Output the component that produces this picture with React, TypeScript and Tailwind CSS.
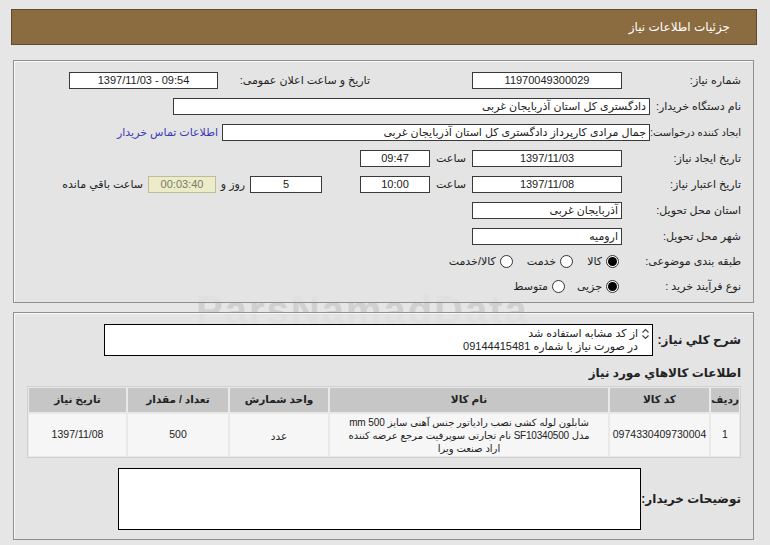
import React from 'react'

function Box({ w, children, align = 'center', className = '' }: { w: string; children?: React.ReactNode; align?: 'center' | 'right'; className?: string }) {
  return (
    <div
      className={`${w} h-[17px] shrink-0 border border-[#3a3a3a] bg-white flex items-center px-[3px] leading-none whitespace-nowrap overflow-hidden ${
        align === 'center' ? 'justify-center' : 'justify-start'
      } ${className}`}
    >
      {children}
    </div>
  )
}

function Radio({ checked, label }: { checked?: boolean; label: string }) {
  return (
    <div className="flex items-center gap-[4px]">
      <span className="w-[13px] h-[13px] rounded-full border border-[#333] bg-white flex items-center justify-center">
        {checked && <span className="w-[9px] h-[9px] rounded-full bg-black"></span>}
      </span>
      <span>{label}</span>
    </div>
  )
}

function Row({ children }: { children: React.ReactNode }) {
  return <div className="h-[26px] flex items-center whitespace-nowrap">{children}</div>
}

export default function App() {
  return (
    <div
      dir="rtl"
      className="relative min-h-[545px] overflow-hidden bg-[#e6e6e6] pt-[9px] pl-[11px] pr-[13px] text-[11px] text-[#222] font-['Liberation_Sans','DejaVu_Sans',sans-serif]"
    >
      {/* watermark */}
      <div className="pointer-events-none absolute inset-0 select-none" dir="ltr">
        <div className="absolute left-[196px] top-[295px] text-[40px] leading-[30px] font-bold tracking-[2px] text-[#cbcbcb] opacity-80">
          ParsNamadData
        </div>
      </div>

      <div className="relative h-[36px] bg-[#8b6b40] border border-[#5e4a2c] flex items-center pr-[26px] text-white text-[12px]">
        جزئیات اطلاعات نیاز
      </div>

      {/* main info panel */}
      <div className="relative mt-[15px] ml-[2px] mr-[3px] border border-[#8f8f8f] shadow-[inset_1px_1px_0_#fafafa] bg-[#e3e3e3]/80 pt-[6px] pb-[3px] pr-[12px]">
        <Row>
          <div className="w-[119px] shrink-0">شماره نیاز:</div>
          <Box w="w-[150px]">11970049300029</Box>
          <div className="w-[152px] shrink-0 mr-[102px]">تاریخ و ساعت اعلان عمومی:</div>
          <Box w="w-[149px]">
            <span dir="ltr">1397/11/03 - 09:54</span>
          </Box>
        </Row>
        <Row>
          <div className="w-[91px] shrink-0">نام دستگاه خریدار:</div>
          <Box w="w-[477px]" align="right">دادگستری کل استان آذربایجان غربی</Box>
        </Row>
        <Row>
          <div className="w-[91px] shrink-0 text-[10px] tracking-[-0.3px]">ایجاد کننده درخواست:</div>
          <Box w="w-[428px]" align="right">جمال مرادی کارپرداز دادگستری کل استان آذربایجان غربی</Box>
          <a className="mr-[4px] text-[#3a3ab8]">اطلاعات تماس خریدار</a>
        </Row>
        <Row>
          <div className="w-[119px] shrink-0">تاریخ ایجاد نیاز:</div>
          <Box w="w-[150px]">1397/11/03</Box>
          <div className="w-[42px] shrink-0 text-center">ساعت</div>
          <Box w="w-[70px]">09:47</Box>
        </Row>
        <Row>
          <div className="w-[119px] shrink-0">تاریخ اعتبار نیاز:</div>
          <Box w="w-[150px]">1397/11/08</Box>
          <div className="w-[42px] shrink-0 text-center">ساعت</div>
          <Box w="w-[70px]">10:00</Box>
          <Box w="w-[72px]" className="mr-[38px]">5</Box>
          <div className="w-[34px] shrink-0 text-center">روز و</div>
          <div className="w-[68px] h-[17px] shrink-0 border border-[#bdbd9a] bg-[#ececc8] text-[#7a7a6a] flex items-center justify-center">
            00:03:40
          </div>
          <div className="mr-[5px]">ساعت باقي مانده</div>
        </Row>
        <Row>
          <div className="w-[119px] shrink-0">استان محل تحویل:</div>
          <Box w="w-[150px]" align="right">آذربایجان غربی</Box>
        </Row>
        <Row>
          <div className="w-[119px] shrink-0">شهر محل تحویل:</div>
          <Box w="w-[150px]" align="right">ارومیه</Box>
        </Row>
        <div className="h-[25px] flex items-center whitespace-nowrap">
          <div className="w-[122px] shrink-0">طبقه بندی موضوعی:</div>
          <div className="flex items-center gap-[14px]">
            <Radio checked label="کالا" />
            <Radio label="خدمت" />
            <Radio label="کالا/خدمت" />
          </div>
        </div>
        <div className="h-[25px] flex items-center whitespace-nowrap">
          <div className="w-[122px] shrink-0">نوع فرآیند خرید :</div>
          <div className="flex items-center gap-[12px]">
            <Radio checked label="جزیی" />
            <Radio label="متوسط" />
          </div>
        </div>
      </div>

      {/* items panel */}
      <div className="relative mt-[9px] ml-[2px] mr-[3px] border border-[#8f8f8f] shadow-[inset_1px_1px_0_#fafafa] bg-[#e3e3e3]/80 pt-[11px] pb-[9px] pr-[12px] pl-[13px]">
        <div className="flex items-center whitespace-nowrap">
          <div className="w-[88px] shrink-0 font-bold text-[12px]">شرح کلي نیاز:</div>
          <div className="w-[549px] h-[32px] border border-black bg-white flex items-start pt-[2px] pr-[2px]">
            <svg width="9" height="12" viewBox="0 0 9 12" className="mt-[1px] shrink-0">
              <path d="M1.5 4.5 L4.5 1.5 L7.5 4.5" fill="none" stroke="#444" strokeWidth="1.2" />
              <path d="M1.5 7.5 L4.5 10.5 L7.5 7.5" fill="none" stroke="#444" strokeWidth="1.2" />
            </svg>
            <div className="mr-[3px] leading-[13px]">
              <div>از کد مشابه استفاده شد</div>
              <div>در صورت نیاز با شماره 09144415481</div>
            </div>
          </div>
        </div>

        <div className="mt-[10px] h-[14px] flex items-center font-bold text-[12px]">اطلاعات کالاهاي مورد نیاز</div>

        <div className="mt-[6px] border border-[#cfcfcf] bg-[#e9e9e9] p-[1px] grid grid-cols-[28px_99px_278px_98px_100px_1fr] gap-[2px] text-[10.5px] whitespace-nowrap">
          <div className="h-[24px] bg-[#c6c6c6] font-bold flex items-center justify-center">ردیف</div>
          <div className="bg-[#c6c6c6] font-bold flex items-center justify-center">کد کالا</div>
          <div className="bg-[#c6c6c6] font-bold flex items-center justify-center">نام کالا</div>
          <div className="bg-[#c6c6c6] font-bold flex items-center justify-center">واحد شمارش</div>
          <div className="bg-[#c6c6c6] font-bold flex items-center justify-center">تعداد / مقدار</div>
          <div className="bg-[#c6c6c6] font-bold flex items-center justify-center">تاریخ نیاز</div>

          <div className="h-[42px] bg-[#f6f6f6] flex items-center justify-center">1</div>
          <div className="bg-[#f6f6f6] flex items-center justify-center">0974330409730004</div>
          <div className="bg-[#f6f6f6] flex flex-col items-center justify-center leading-[13px] text-center text-[10px] tracking-[-0.2px]">
            <div>شابلون لوله کشی نصب رادیاتور جنس آهنی سایز 500 mm</div>
            <div>مدل SF10340500 نام تجارتی سوپرفیت مرجع عرضه کننده</div>
            <div>اراد صنعت ویرا</div>
          </div>
          <div className="bg-[#f6f6f6] flex items-center justify-center pt-[4px]">عدد</div>
          <div className="bg-[#f6f6f6] flex items-center justify-center">500</div>
          <div className="bg-[#f6f6f6] flex items-center justify-center">1397/11/08</div>
        </div>

        <div className="mt-[10px] flex items-center whitespace-nowrap">
          <div className="w-[100px] shrink-0 font-bold text-[12px]">توضیحات خریدار:</div>
          <div className="w-[523px] h-[62px] border border-black bg-white"></div>
        </div>
      </div>
    </div>
  )
}
